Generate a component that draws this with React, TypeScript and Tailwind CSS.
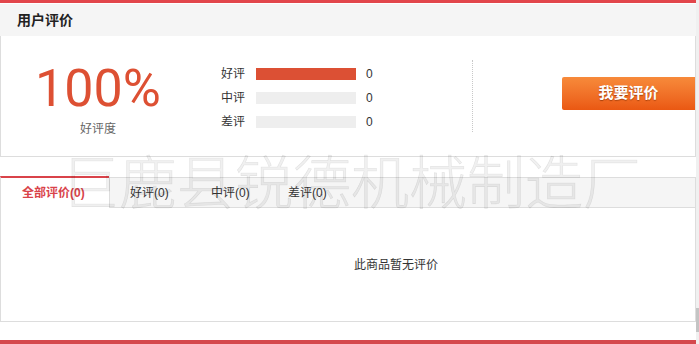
import React from 'react'

const rows = [
  { label: '好评', pct: 100, count: 0 },
  { label: '中评', pct: 0, count: 0 },
  { label: '差评', pct: 0, count: 0 },
]

const tabs = ['好评(0)', '中评(0)', '差评(0)']

export default function App() {
  return (
    <div
      className="relative flex w-[699px] h-[344px] overflow-hidden bg-white text-[#333]"
      style={{ fontFamily: '"Liberation Sans", "Noto Sans CJK SC", sans-serif' }}
    >
      <div className="flex flex-col w-[696px]">
        {/* Cabecera */}
        <div className="h-[3px] bg-[#e2464b]" />
        <div className="h-[33px] flex items-center pl-[17px] bg-[#f5f5f5] border-t border-white">
          <span className="text-[14px] font-bold text-[#222]">用户评价</span>
        </div>

        {/* Resumen */}
        <div className="h-[121px] flex border-x border-b border-[#ddd]">
          <div className="w-[194px] flex flex-col items-center pt-[25px]">
            <span
              className="text-[52px] leading-[56px] text-[#dd5033]"
              style={{ fontFamily: 'Roboto, sans-serif' }}
            >
              100%
            </span>
            <span className="text-[12px] text-[#666] mt-[3px]">好评度</span>
          </div>
          <div className="flex flex-col pt-[32px] pl-[26px] gap-[12px]">
            {rows.map((r) => (
              <div key={r.label} className="flex items-center h-[12px]">
                <span className="text-[12px] w-[35px]">{r.label}</span>
                <div className="w-[100px] h-[12px] bg-[#eeeeee]">
                  <div className="h-full bg-[#dc5034]" style={{ width: `${r.pct}%` }} />
                </div>
                <span className="text-[12px] ml-[10px]">{r.count}</span>
              </div>
            ))}
          </div>
          <div className="ml-[99px] mt-[24px] h-[72px] border-l border-dotted border-[#c8c8c8]" />
          <div className="flex-1 flex justify-end pt-[41px]">
            <button
              className="w-[133px] h-[33px] rounded-l-[2px] text-white text-[15px] font-bold bg-gradient-to-b from-[#f78a3a] to-[#ea5812]"
              style={{ textShadow: '0 1px 1px rgba(120,40,0,0.6)' }}
            >
              我要评价
            </button>
          </div>
        </div>

        {/* Pestañas */}
        <div className="mt-[19px] flex h-[32px]">
          <div className="w-[109px] h-full bg-white border-t-2 border-[#d9434a] border-l border-l-[#ddd] flex items-center pl-[21px]">
            <span className="text-[12px] font-bold text-[#d9434a]">全部评价(0)</span>
          </div>
          <div className="flex-1 flex mt-[1px] bg-[#f5f5f5] border-y border-l border-r border-[#ddd]">
            {tabs.map((t, i) => (
              <div key={t} className={`${i === 0 ? 'w-[81px]' : 'w-[77px]'} flex items-center pl-[20px]`}>
                <span className="text-[12px] text-[#333]">{t}</span>
              </div>
            ))}
          </div>
        </div>
        <div className="h-[114px] border-x border-b border-[#ddd] pt-[44px] pl-[353px]">
          <span className="text-[12px] text-[#333]">此商品暂无评价</span>
        </div>
        <div className="mt-[18px] h-[4px] bg-[#d5484d]" />
      </div>

      {/* Barra de desplazamiento */}
      <div className="w-[3px] h-full bg-[#f0f0f0] flex flex-col">
        <div className="mt-[308px] h-[24px] bg-[#c4c4c4]" />
      </div>

      {/* Marca de agua */}
      <div
        className="absolute left-[61px] top-[150px] text-[58px] leading-none font-light whitespace-nowrap pointer-events-none text-[rgba(0,0,0,0.06)]"
        style={{ fontFamily: '"Noto Sans CJK SC", sans-serif', WebkitTextStroke: '0.6px rgba(0,0,0,0.09)' }}
      >
        巨鹿县锐德机械制造厂
      </div>
    </div>
  )
}
